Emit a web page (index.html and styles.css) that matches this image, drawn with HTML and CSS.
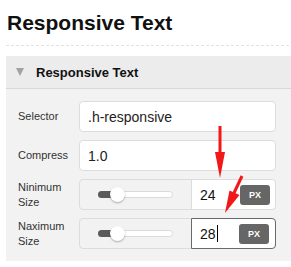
FILE: index.html
```html
<!DOCTYPE html>
<html lang="en">
<head>
  <meta charset="UTF-8">
  <title>Responsive Text</title>
  <link rel="stylesheet" href="styles.css">
</head>
<body>
  <h1 class="page-title">Responsive Text</h1>
  <div class="divider"></div>

  <!-- Settings panel -->
  <div class="panel">
    <div class="panel-head">
      <span class="caret"></span>
      <span class="panel-title">Responsive Text</span>
    </div>
    <div class="panel-body">
      <label class="field-label">Selector</label>
      <div class="text-input">.h-responsive</div>

      <label class="field-label">Compress</label>
      <div class="text-input">1.0</div>

      <label class="field-label">Ninimum<br>Size</label>
      <div class="range-box">
        <div class="range-part">
          <div class="track"><div class="fill"></div><div class="thumb"></div></div>
        </div>
        <div class="num-part">
          <span class="num">24</span>
          <span class="unit">PX</span>
        </div>
      </div>

      <label class="field-label">Naximum<br>Size</label>
      <div class="range-box">
        <div class="range-part">
          <div class="track"><div class="fill"></div><div class="thumb"></div></div>
        </div>
        <div class="num-part focused">
          <span class="num">28<span class="caret-line"></span></span>
          <span class="unit">PX</span>
        </div>
      </div>
    </div>
  </div>

  <!-- Annotation arrows -->
  <svg class="arrows" width="291" height="267" viewBox="0 0 291 267">
    <line x1="220" y1="126" x2="220" y2="156" stroke="#f01818" stroke-width="3"/>
    <polygon points="215,152 225,152 220,178" fill="#f01818"/>
    <line x1="242" y1="176" x2="234" y2="193" stroke="#f01818" stroke-width="3"/>
    <polygon points="239.5,195 229.5,190.5 225,213" fill="#f01818"/>
  </svg>
</body>
</html>
```

FILE: styles.css
```css
* {
  box-sizing: border-box;
}
body {
  margin: 0;
  font-family: "Liberation Sans", Arial, sans-serif;
  color: #222;
  background: #fff;
  position: relative;
  width: 291px;
  height: 267px;
  overflow: hidden;
}
.page-title {
  margin: 11px 0 10px 7px;
  font-size: 21px;
  line-height: 24px;
  font-weight: bold;
  color: #111;
}
.divider {
  margin: 0 2px 10px 6px;
  border-top: 1px dashed #e2e2e2;
}
.panel {
  margin-left: 6px;
  background: #f2f2f2;
}
.panel-head {
  height: 33px;
  display: flex;
  align-items: center;
  padding-left: 10px;
  background: #ececec;
  border-bottom: 1px solid #d8d8d8;
}
.caret {
  width: 0;
  height: 0;
  border-left: 4.5px solid transparent;
  border-right: 4.5px solid transparent;
  border-top: 8px solid #a2a2a2;
  margin-right: 12px;
}
.panel-title {
  font-size: 13px;
  font-weight: bold;
  color: #111;
}
.panel-body {
  display: grid;
  grid-template-columns: 61px 1fr;
  grid-auto-rows: 31px;
  row-gap: 8px;
  padding: 12px 15px 12px 12px;
}
.field-label {
  align-self: center;
  font-size: 11px;
  line-height: 15px;
  color: #333;
}
.text-input {
  display: flex;
  align-items: center;
  padding-left: 8px;
  background: #fff;
  border: 1px solid #dcdcdc;
  border-radius: 4px;
  font-size: 14px;
  color: #222;
}
.range-box {
  display: flex;
  border: 1px solid #dcdcdc;
  border-radius: 4px;
}
.range-part {
  width: 111px;
  display: flex;
  align-items: center;
  padding-left: 18px;
}
.track {
  position: relative;
  width: 75px;
  height: 7px;
  background: #fff;
  border: 1px solid #dadada;
  border-radius: 4px;
}
.fill {
  position: absolute;
  left: -1px;
  top: -1px;
  width: 19px;
  height: 7px;
  background: #5a5a5a;
  border-radius: 4px 0 0 4px;
}
.thumb {
  position: absolute;
  left: 11px;
  top: -5px;
  width: 15px;
  height: 15px;
  border-radius: 50%;
  background: #fff;
  box-shadow: 0 1px 2px rgba(0, 0, 0, 0.3);
}
.num-part {
  flex: 1;
  display: flex;
  align-items: center;
  justify-content: space-between;
  padding: 0 5px 0 8px;
  background: #fff;
  border-left: 1px solid #dcdcdc;
  border-radius: 0 4px 4px 0;
}
.num-part.focused {
  margin: -1px -1px -1px 0;
  padding-right: 6px;
  border: 1px solid #6a6a6a;
  border-radius: 0 4px 4px 0;
}
.num {
  font-size: 14px;
  color: #111;
  display: flex;
  align-items: center;
}
.caret-line {
  width: 1px;
  height: 17px;
  background: #000;
  margin-left: 1px;
}
.unit {
  width: 30px;
  height: 20px;
  display: flex;
  align-items: center;
  justify-content: center;
  background: #666;
  color: #fff;
  font-size: 9px;
  font-weight: bold;
  border-radius: 3px;
}
.arrows {
  position: absolute;
  left: 0;
  top: 0;
}
```
